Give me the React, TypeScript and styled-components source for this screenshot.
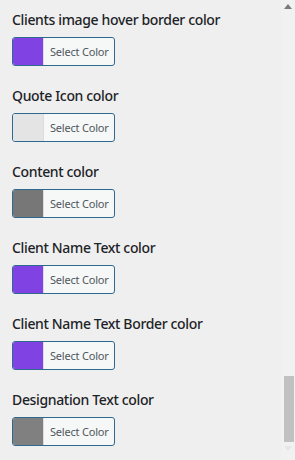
import React from 'react';
import styled, { createGlobalStyle } from 'styled-components';

const GlobalStyle = createGlobalStyle`
  html, body {
    margin: 0;
    padding: 0;
    background: #efefef;
  }
  body {
    font-family: "Noto Sans", "Open Sans", sans-serif;
  }
`;

interface ColorSetting {
  label: string;
  color: string;
}

const settings: ColorSetting[] = [
  { label: 'Clients image hover border color', color: '#8142e4' },
  { label: 'Quote Icon color', color: '#e4e4e4' },
  { label: 'Content color', color: '#777777' },
  { label: 'Client Name Text color', color: '#8142e4' },
  { label: 'Client Name Text Border color', color: '#8142e4' },
  { label: 'Designation Text color', color: '#808080' },
];

function App() {
  return (
    <>
      <GlobalStyle />
      <Frame>
        <Panel>
          {settings.map((s) => (
            <Field key={s.label}>
              <Label>{s.label}</Label>
              <PickerButton type="button">
                <Swatch $color={s.color} />
                <ButtonText>Select Color</ButtonText>
              </PickerButton>
            </Field>
          ))}
        </Panel>
        <ScrollTrack>
          <Arrow viewBox="0 0 8 5">
            <path d="M4 0 L8 5 L0 5 Z" fill="#7a7a7a" />
          </Arrow>
          <TrackSpace />
          <Thumb />
          <Arrow viewBox="0 0 8 5">
            <path d="M4 5 L8 0 L0 0 Z" fill="#e6e6e6" />
          </Arrow>
        </ScrollTrack>
      </Frame>
    </>
  );
}

const Frame = styled.div`
  display: flex;
  width: 295px;
  height: 460px;
  overflow: hidden;
`;

const Panel = styled.div`
  flex: 1;
  display: flex;
  flex-direction: column;
  gap: 20px;
  padding: 10px 0 0 12px;
`;

const Field = styled.div`
  display: flex;
  flex-direction: column;
  align-items: flex-start;
  gap: 7px;
`;

const Label = styled.div`
  font-size: 14px;
  line-height: 20px;
  font-weight: 500;
  letter-spacing: -0.35px;
  color: #1d2327;
`;

const PickerButton = styled.button`
  display: flex;
  align-items: stretch;
  width: 103px;
  height: 29px;
  padding: 0;
  border: 1px solid #2e6a8e;
  border-radius: 3px;
  background: #f6f7f7;
  overflow: hidden;
  cursor: pointer;
`;

const Swatch = styled.span<{ $color: string }>`
  width: 30px;
  background: ${(p) => p.$color};
  border-right: 1px solid #dcdcde;
`;

const ButtonText = styled.span`
  flex: 1;
  display: flex;
  align-items: center;
  padding-left: 6px;
  font-family: "Noto Sans", "Open Sans", sans-serif;
  font-size: 11px;
  letter-spacing: -0.2px;
  color: #50575e;
`;

const ScrollTrack = styled.div`
  width: 14px;
  display: flex;
  flex-direction: column;
  align-items: center;
  background: #f1f1f1;
`;

const Arrow = styled.svg`
  width: 8px;
  height: 5px;
  margin: 4px 0;
`;

const TrackSpace = styled.div`
  height: 363px;
`;

const Thumb = styled.div`
  width: 10px;
  height: 66px;
  margin-left: 2px;
  background: #c1c1c1;
`;

export default App;
